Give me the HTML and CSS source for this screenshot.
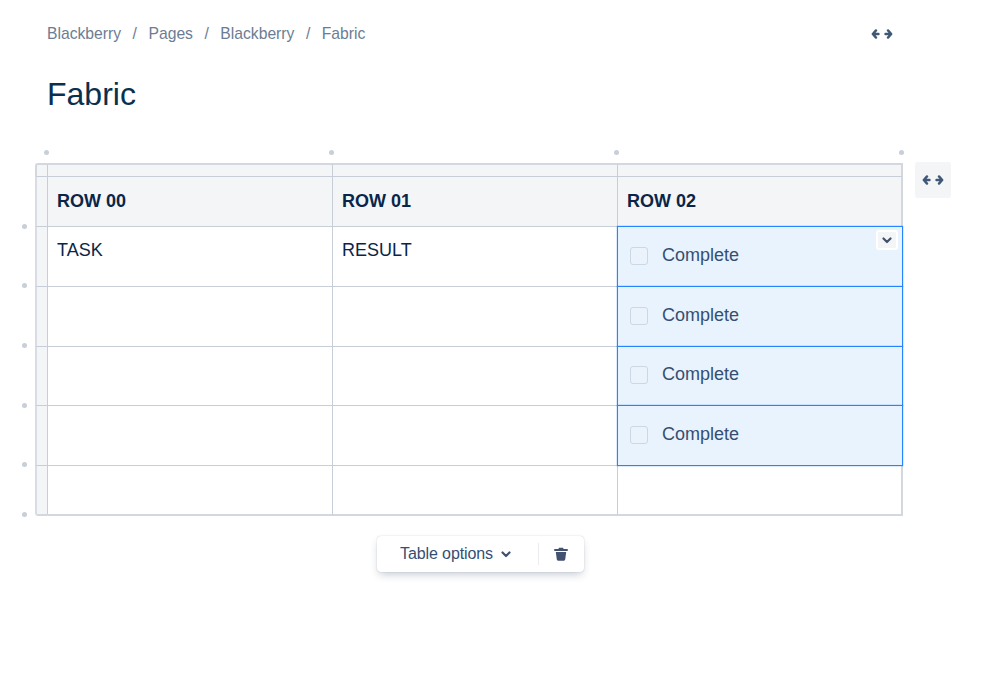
FILE: index.html
```html
<!DOCTYPE html>
<html lang="en">
<head>
<meta charset="utf-8">
<title>Fabric</title>
<link rel="stylesheet" href="styles.css">
</head>
<body>
<svg class="defs" width="0" height="0" aria-hidden="true">
  <symbol id="expand" viewBox="0 0 22 10">
    <path d="M5 1.400 1.800 5 5 8.600M2.500 5H7.500M17 1.400 20.200 5 17 8.600M19.500 5H14.500" fill="none" stroke="currentColor" stroke-width="2.400" stroke-linecap="round" stroke-linejoin="round"/>
  </symbol>
  <symbol id="chev" viewBox="0 0 10 7">
    <path d="M1.500 1.500 5 5l3.500-3.500" fill="none" stroke="currentColor" stroke-width="2.200" stroke-linecap="round" stroke-linejoin="round"/>
  </symbol>
</svg>
<header class="topbar">
  <nav class="crumbs">
    <span>Blackberry</span><i>/</i><span>Pages</span><i>/</i><span>Blackberry</span><i>/</i><span>Fabric</span>
  </nav>
  <svg class="expand-icon"><use href="#expand"/></svg>
</header>
<h1 class="title">Fabric</h1>
<main class="editor">
  <span class="dot dot-top d1"></span><span class="dot dot-top d2"></span><span class="dot dot-top d3"></span><span class="dot dot-top d4"></span>
  <span class="dot dot-left l1"></span><span class="dot dot-left l2"></span><span class="dot dot-left l3"></span><span class="dot dot-left l4"></span><span class="dot dot-left l5"></span><span class="dot dot-left l6"></span>
  <div class="table">
    <div class="ctl corner"></div><div class="ctl top"></div><div class="ctl top"></div><div class="ctl top last"></div>

    <div class="ctl side"></div><div class="cell head">ROW 00</div><div class="cell head">ROW 01</div><div class="cell head last">ROW 02</div>

    <div class="ctl side"></div><div class="cell">TASK</div><div class="cell">RESULT</div>
    <div class="cell sel last"><span class="box"></span><span class="label">Complete</span><span class="cell-menu"><svg class="chev"><use href="#chev"/></svg></span></div>

    <div class="ctl side"></div><div class="cell"></div><div class="cell"></div>
    <div class="cell sel last"><span class="box"></span><span class="label">Complete</span></div>

    <div class="ctl side"></div><div class="cell"></div><div class="cell"></div>
    <div class="cell sel last"><span class="box"></span><span class="label">Complete</span></div>

    <div class="ctl side"></div><div class="cell"></div><div class="cell"></div>
    <div class="cell sel last"><span class="box"></span><span class="label">Complete</span></div>

    <div class="ctl side end"></div><div class="cell end"></div><div class="cell end"></div><div class="cell end last"></div>
  </div>
  <button class="resize" type="button" aria-label="Expand"><svg class="expand-icon"><use href="#expand"/></svg></button>
</main>
<div class="toolbar">
  <span class="options">Table options</span>
  <svg class="chev tb-chev"><use href="#chev"/></svg>
  <span class="sep"></span>
  <svg class="trash" viewBox="0 0 14 14"><path d="M5 .8h4l.6 1.200H13a.7.7 0 0 1 0 2H1a.7.7 0 0 1 0-2h3.400zM1.800 5h10.400l-1 7.600a1.300 1.300 0 0 1-1.300 1.100H4.100a1.300 1.300 0 0 1-1.300-1.100z" fill="currentColor"/></svg>
</div>
</body>
</html>
```
FILE: styles.css
```css
* { box-sizing: border-box; }
html, body { margin: 0; padding: 0; background: #fff; }
body {
  width: 999px;
  height: 680px;
  overflow: hidden;
  font-family: "Liberation Sans", Arial, sans-serif;
  color: #172b4d;
}
.defs { position: absolute; }
.topbar {
  display: flex;
  align-items: center;
  justify-content: space-between;
  padding: 24px 106px 0 47px;
  height: 44px;
}
.crumbs {
  display: flex;
  font-size: 15.700px;
  line-height: 20px;
  color: #6b7d94;
}
.crumbs i { font-style: normal; margin: 0 11.500px; color: #6b7d94; }
.expand-icon { width: 22px; height: 10px; color: #3f5878; display: block; }
.title {
  margin: 30px 0 0 47px;
  font-size: 32px;
  font-weight: 400;
  line-height: 40px;
  color: #09304f;
}
.editor {
  position: relative;
  margin: 49px 0 0 35px;
  width: 916px;
}
.table {
  display: grid;
  width: 868px;
  grid-template-columns: 13px 285px 285px 285px;
  grid-template-rows: 14px 50px 60px 60px 59px 60px 50px;
}
.ctl {
  background: #f4f5f7;
  border-right: 1px solid #c8ced8;
  border-bottom: 1px solid #c8ced8;
}
.ctl.corner {
  border-top: 2px solid #d3d8df;
  border-left: 2px solid #d3d8df;
  border-top-left-radius: 3px;
}
.ctl.top { border-top: 2px solid #d3d8df; }
.ctl.side { border-left: 2px solid #d8dce3; }
.ctl.side.end { border-bottom: 2px solid #d3d8df; border-bottom-left-radius: 3px; }
.ctl.last { border-right: 2px solid #d3d8df; }
.cell {
  display: flex;
  align-items: flex-start;
  padding: 12px 9px;
  font-size: 18px;
  line-height: 22px;
  color: #09264a;
  border-right: 1px solid #c8ced8;
  border-bottom: 1px solid #c8ced8;
}
.cell.head {
  align-items: center;
  padding-top: 0;
  padding-bottom: 2px;
  font-weight: 700;
  background: #f4f5f7;
}
.cell.last { border-right: 2px solid #d3d8df; }
.cell.end { border-bottom: 2px solid #d3d8df; }
.cell.sel {
  position: relative;
  align-items: center;
  padding: 0 12px 2px;
  margin: -1px 0 0 -1px;
  background: #e8f3fd;
  border: 1px solid #2684ff;
  box-shadow: 0 0 1px #2684ff;
  color: #344f73;
}
.box {
  width: 18px;
  height: 18px;
  border: 1.500px solid #cbd7e5;
  border-radius: 3px;
  background: #eaf3fc;
  flex: none;
}
.label { margin: 0 0 2px 14px; }
.cell-menu {
  position: absolute;
  top: 3px;
  right: 4px;
  width: 22px;
  height: 20px;
  display: flex;
  align-items: center;
  justify-content: center;
  background: #f4f5f7;
  border: 2px solid #fff;
  border-radius: 3px;
  color: #42526e;
}
.chev { width: 10px; height: 7px; display: block; }
.resize {
  position: absolute;
  left: 880px;
  top: -1px;
  width: 36px;
  height: 36px;
  padding: 0;
  border: 0;
  border-radius: 3px;
  background: #f4f5f7;
  display: flex;
  align-items: center;
  justify-content: center;
}
.dot {
  position: absolute;
  width: 5px;
  height: 5px;
  border-radius: 50%;
  background: #c9cfd9;
}
.dot-top { top: -13px; }
.d1 { left: 9px; }
.d2 { left: 294px; }
.d3 { left: 579px; }
.d4 { left: 864px; }
.dot-left { left: -13px; }
.l1 { top: 61px; }
.l2 { top: 120px; }
.l3 { top: 180px; }
.l4 { top: 240px; }
.l5 { top: 299px; }
.l6 { top: 349px; }
.toolbar {
  display: flex;
  align-items: center;
  width: 207px;
  height: 36px;
  margin: 20px 0 0 377px;
  padding-left: 23px;
  background: #fff;
  border-radius: 4px;
  box-shadow: 0 0 1px rgba(9, 30, 66, 0.31), 0 4px 8px -2px rgba(9, 30, 66, 0.25);
  color: #42526e;
}
.options { font-size: 16px; letter-spacing: -0.100px; color: #344f73; }
.tb-chev { margin-left: 8px; }
.sep { width: 1px; height: 22px; background: #ebecf0; margin-left: 27px; }
.trash { width: 14px; height: 14px; margin-left: 15px; display: block; }
```
